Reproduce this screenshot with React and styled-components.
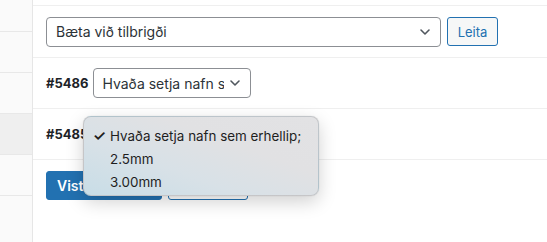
import React from 'react';
import styled, { createGlobalStyle } from 'styled-components';

const GlobalStyle = createGlobalStyle`
  html, body {
    margin: 0;
    padding: 0;
    background: #fff;
    font-family: Inter, "Liberation Sans", sans-serif;
    color: #2c3338;
  }
`;

const Page = styled.div`
  position: relative;
  display: flex;
  width: 547px;
  height: 242px;
  overflow: hidden;
`;

const Sidebar = styled.div`
  width: 32px;
  flex-shrink: 0;
  border-right: 1px solid #e6e6e6;
  background: #fafafa;
  display: flex;
  flex-direction: column;
`;

const SideRow = styled.div`
  height: ${p => p.h || 40}px;
  flex-shrink: 0;
  border-bottom: 1px solid #e8e8e8;
  background: ${p => (p.active ? '#efefef' : 'transparent')};
`;

const Main = styled.div`
  flex: 1;
  display: flex;
  flex-direction: column;
`;

const Row = styled.div`
  height: ${p => p.h}px;
  flex-shrink: 0;
  display: flex;
  align-items: center;
  gap: ${p => p.gap || 5}px;
  padding-left: 13px;
  border-bottom: ${p => (p.noLine ? 'none' : '1px solid #efefef')};
`;

const SelectBox = styled.div`
  box-sizing: border-box;
  width: ${p => p.w}px;
  height: 30px;
  border: 1px solid #8c8f94;
  border-radius: 4px;
  background: #fff;
  display: flex;
  align-items: center;
  padding: 0 8px 0 ${p => p.pl || 8}px;
  font-size: 14px;
  color: #2c3338;
  white-space: nowrap;
  overflow: hidden;
`;

const SelectText = styled.span`
  flex: 1;
  overflow: hidden;
  margin-right: 4px;
`;

const Chevron = () => (
  <svg width="14" height="14" viewBox="0 0 14 14" fill="none">
    <path d="M3 5l4 4 4-4" stroke="#50575e" strokeWidth="1.6" strokeLinecap="round" strokeLinejoin="round" />
  </svg>
);

const OutlineButton = styled.button`
  box-sizing: border-box;
  height: 29px;
  width: ${p => p.w}px;
  border: 1px solid #2271b1;
  border-radius: 3px;
  background: ${p => p.bg || '#f6f7f7'};
  color: #2271b1;
  font-family: inherit;
  font-size: 13px;
  padding: 0;
  white-space: nowrap;
  overflow: hidden;
`;

const PrimaryButton = styled.button`
  box-sizing: border-box;
  height: 29px;
  width: 116px;
  border: 1px solid #2271b1;
  border-radius: 3px;
  background: #2271b1;
  color: #fff;
  font-family: inherit;
  font-size: 14px;
  font-weight: 600;
  text-align: left;
  padding: 0 0 0 10px;
  white-space: nowrap;
  overflow: hidden;
`;

const VariantId = styled.strong`
  font-size: 13px;
  font-weight: 700;
  color: #1d2327;
`;

const Menu = styled.div`
  position: absolute;
  left: 83px;
  top: 116px;
  width: 236px;
  height: 80px;
  box-sizing: border-box;
  padding-top: 7px;
  border-radius: 8px;
  border: 1px solid rgba(0, 0, 0, 0.12);
  background: linear-gradient(20deg, #c8dde7 0%, #d8e1e7 35%, #e1e1e3 65%, #e2e2e4 100%);
  box-shadow: 0 6px 18px rgba(0, 0, 0, 0.18), 0 0 1px rgba(0, 0, 0, 0.2);
`;

const MenuItem = styled.div`
  height: 23px;
  display: flex;
  align-items: center;
  font-size: 13.4px;
  color: #1e1e1e;
  white-space: nowrap;
`;

const Check = styled.span`
  width: 26px;
  text-align: right;
  padding-right: 4px;
  box-sizing: border-box;
  font-size: 15px;
  font-weight: 600;
`;

export default function App() {
  return (
    <Page>
      <GlobalStyle />
      <Sidebar>
        <SideRow h={31} />
        <SideRow />
        <SideRow />
        <SideRow active />
        <SideRow />
      </Sidebar>
      <Main>
        <Row h={5} />
        <Row h={51} gap={6}>
          <SelectBox w={395} pl={9}>
            <SelectText>Bæta við tilbrigði</SelectText>
            <Chevron />
          </SelectBox>
          <OutlineButton w={51}>Leita</OutlineButton>
        </Row>
        <Row h={50}>
          <VariantId>#5486</VariantId>
          <SelectBox w={158}>
            <SelectText>Hvaða setja nafn sem erhellip;</SelectText>
            <Chevron />
          </SelectBox>
        </Row>
        <Row h={50}>
          <VariantId>#5485</VariantId>
        </Row>
        <Row h={51} noLine gap={6}>
          <PrimaryButton>Vista breytingar</PrimaryButton>
          <OutlineButton w={80} bg="#fff">Hætta við</OutlineButton>
        </Row>
      </Main>
      <Menu>
        <MenuItem><Check>✓</Check>Hvaða setja nafn sem erhellip;</MenuItem>
        <MenuItem><Check />2.5mm</MenuItem>
        <MenuItem><Check />3.00mm</MenuItem>
      </Menu>
    </Page>
  );
}
